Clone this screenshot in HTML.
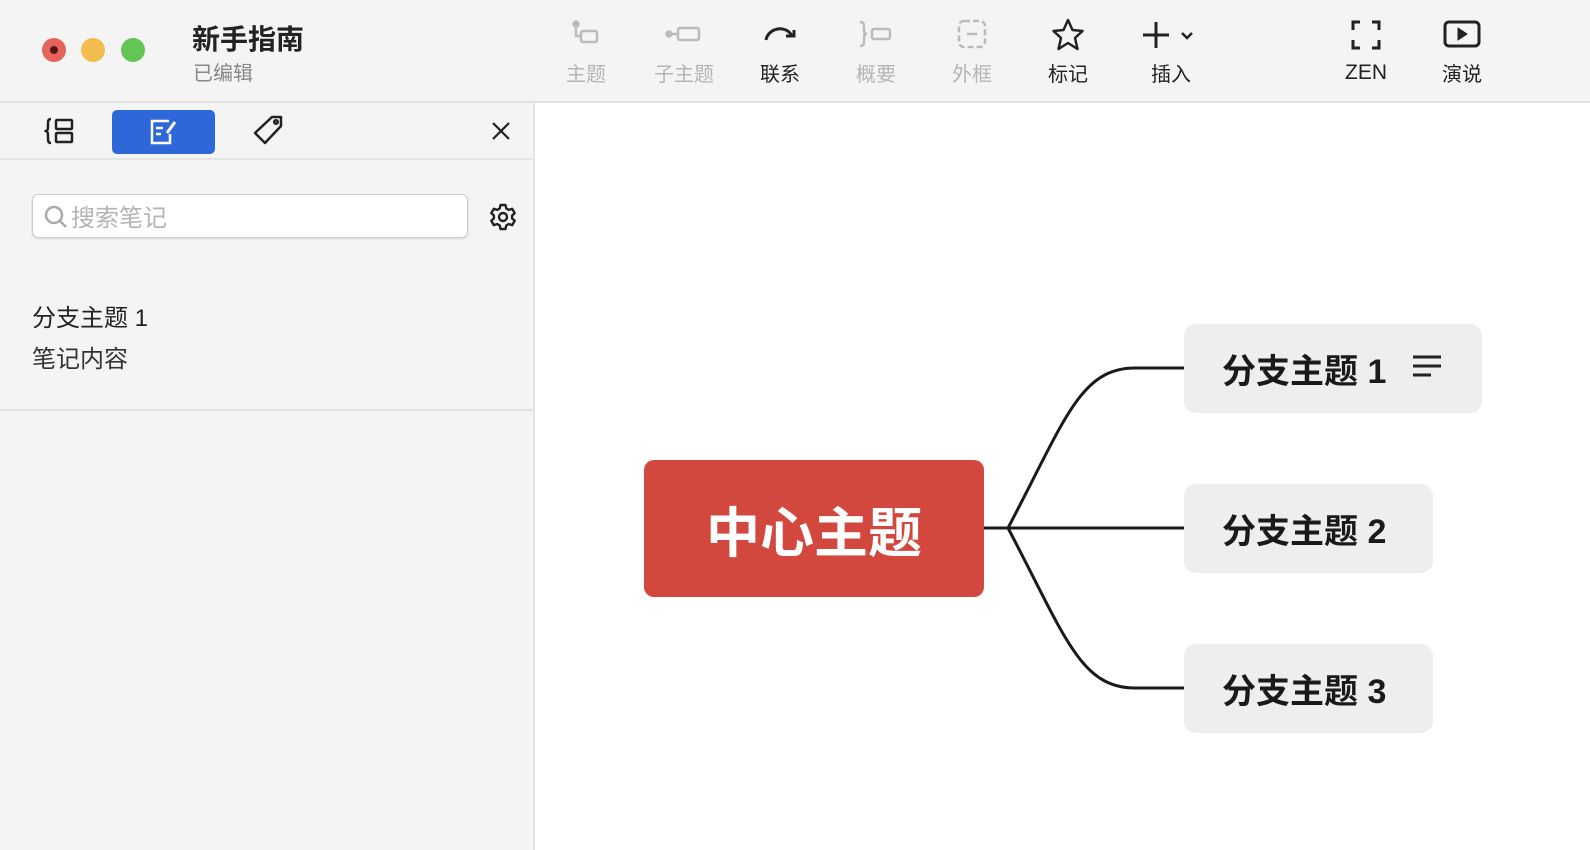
<!DOCTYPE html>
<html><head><meta charset="utf-8"><style>
*{margin:0;padding:0;box-sizing:border-box}
body{width:1590px;height:850px;overflow:hidden;background:#fff;font-family:"Liberation Sans","Noto Sans CJK SC",sans-serif;position:relative}
.hdr{position:absolute;left:0;top:0;width:1590px;height:103px;background:#f4f4f4;border-bottom:2px solid #e2e2e2}
.tl{position:absolute;top:38px;width:24px;height:24px;border-radius:50%}
.ti{position:absolute;text-align:center;font-size:20px;transform:translateX(-50%);top:58px;white-space:nowrap}
.ic{position:absolute;top:18px;transform:translateX(-50%)}
.side{position:absolute;left:0;top:103px;width:535px;height:747px;background:#f4f4f4;border-right:2px solid #e4e4e4}
.node{position:absolute;background:#eeeeec;border-radius:12px;font-size:34px;font-weight:bold;color:#1a1a1a;padding-left:38px;display:flex;align-items:center}
</style></head><body>
<div class="hdr">
 <div class="tl" style="left:42px;background:#e5655b"><div style="position:absolute;left:8px;top:8px;width:8px;height:8px;border-radius:50%;background:#5a1410"></div></div>
 <div class="tl" style="left:81px;background:#f2bd4f"></div>
 <div class="tl" style="left:121px;background:#62c554"></div>
 <div style="position:absolute;left:192px;top:18px;font-size:28px;font-weight:bold;color:#222">新手指南</div>
 <div style="position:absolute;left:193px;top:57px;font-size:20px;color:#888">已编辑</div>

 <svg class="ic" style="left:586px" width="36" height="34" viewBox="0 0 36 34" fill="none" stroke="#bbb" stroke-width="2.5"><circle cx="8" cy="6" r="2.5" fill="#bbb"/><path d="M8 8v10h5"/><rect x="13" y="13" width="16" height="11" rx="2"/></svg>
 <div class="ti" style="left:586px;color:#b5b5b5">主题</div>
 <svg class="ic" style="left:684px" width="40" height="34" viewBox="0 0 40 34" fill="none" stroke="#bbb" stroke-width="2.5"><circle cx="5" cy="16" r="2.5" fill="#bbb"/><path d="M7 16h6"/><rect x="14" y="10" width="21" height="12" rx="2"/></svg>
 <div class="ti" style="left:684px;color:#b5b5b5">子主题</div>
 <svg class="ic" style="left:780px" width="40" height="34" viewBox="0 0 40 34" fill="none" stroke="#222" stroke-width="3"><path d="M6 22C8 10 26 6 32 18"/><path d="M26 18h8v-6" /></svg>
 <div class="ti" style="left:780px;color:#222">联系</div>
 <svg class="ic" style="left:876px" width="40" height="34" viewBox="0 0 40 34" fill="none" stroke="#bbb" stroke-width="2.5"><path d="M4 4c4 0 4 2 4 6s0 6 3 6c-3 0-3 2-3 6s0 6-4 6"/><rect x="16" y="11" width="18" height="10" rx="2"/></svg>
 <div class="ti" style="left:876px;color:#b5b5b5">概要</div>
 <svg class="ic" style="left:972px" width="36" height="34" viewBox="0 0 36 34" fill="none" stroke="#bbb" stroke-width="2.5" stroke-dasharray="6 3"><rect x="5" y="3" width="26" height="26" rx="5"/><path d="M13 16h10" stroke-dasharray="none"/></svg>
 <div class="ti" style="left:972px;color:#b5b5b5">外框</div>
 <svg class="ic" style="left:1068px" width="36" height="34" viewBox="0 0 36 34" fill="none" stroke="#222" stroke-width="2.5" stroke-linejoin="round"><path d="M18 2l4.5 10 10 1-7.5 7 2.5 11-9.5-6-9.5 6 2.5-11-7.5-7 10-1z"/></svg>
 <div class="ti" style="left:1068px;color:#222">标记</div>
 <svg class="ic" style="left:1171px" width="70" height="34" viewBox="0 0 70 34" fill="none" stroke="#222" stroke-width="3"><path d="M20 4v26M7 17h26"/><path d="M46 15l5 5 5-5" stroke-width="2.5"/></svg>
 <div class="ti" style="left:1171px;color:#222">插入</div>
 <svg class="ic" style="left:1366px" width="36" height="34" viewBox="0 0 36 34" fill="none" stroke="#222" stroke-width="3"><path d="M12 4H5v8M24 4h7v8M5 22v8h7M31 22v8h-7"/></svg>
 <div class="ti" style="left:1366px;color:#222;top:61px;font-size:21px">ZEN</div>
 <svg class="ic" style="left:1462px" width="40" height="34" viewBox="0 0 40 34" fill="none" stroke="#222" stroke-width="3"><rect x="3" y="4" width="34" height="24" rx="4"/><path d="M16 10v12l9-6z" fill="#222" stroke-width="1"/></svg>
 <div class="ti" style="left:1462px;color:#222">演说</div>
</div>

<div class="side">
 <div style="position:absolute;left:0;top:55px;width:533px;height:2px;background:#e4e4e4"></div>
 <svg style="position:absolute;left:44px;top:13px" width="34" height="30" viewBox="0 0 34 30" fill="none" stroke="#222" stroke-width="2.5"><path d="M7 3C4 3 4 5 4 9s0 5-2 6c2 1 2 2 2 6s0 6 3 6"/><rect x="12" y="4" width="16" height="9" rx="1"/><rect x="12" y="17" width="16" height="9" rx="1"/></svg>
 <div style="position:absolute;left:112px;top:7px;width:103px;height:44px;background:#2e67d7;border-radius:5px"></div>
 <svg style="position:absolute;left:148px;top:14px" width="34" height="30" viewBox="0 0 34 30" fill="none" stroke="#fff" stroke-width="2.5"><path d="M21 4H4v22h18v-9"/><path d="M8 11h7M8 17h5"/><path d="M27 5l-8 11" stroke-width="3"/></svg>
 <svg style="position:absolute;left:252px;top:11px" width="34" height="34" viewBox="0 0 34 34" fill="none" stroke="#222" stroke-width="2.5" stroke-linejoin="round"><path d="M20 3h9v9L13 29 3 19z"/><circle cx="24" cy="8" r="1.8"/></svg>
 <svg style="position:absolute;left:490px;top:17px" width="22" height="22" viewBox="0 0 22 22" stroke="#222" stroke-width="2.2"><path d="M3 3l16 16M19 3L3 19"/></svg>
 <div style="position:absolute;left:32px;top:91px;width:436px;height:44px;background:#fff;border:1.5px solid #ccc;border-radius:6px;box-shadow:0 1px 2px rgba(0,0,0,.12)">
  <svg style="position:absolute;left:10px;top:9px" width="26" height="26" viewBox="0 0 26 26" fill="none" stroke="#aaa" stroke-width="2.5"><circle cx="11" cy="11" r="8"/><path d="M17 17l6 6"/></svg>
  <div style="position:absolute;left:38px;top:3px;font-size:24px;color:#b4b4b4">搜索笔记</div>
 </div>
 <svg style="position:absolute;left:488px;top:99px" width="30" height="30" viewBox="0 0 30 30" fill="none" stroke="#222" stroke-width="2.4" stroke-linejoin="round"><path d="M12.5 3h5l.8 3.5 2.5 1.4 3.4-1.1 2.5 4.3-2.6 2.4v2.9l2.6 2.4-2.5 4.3-3.4-1.1-2.5 1.4-.8 3.6h-5l-.8-3.6-2.5-1.4-3.4 1.1-2.5-4.3 2.6-2.4v-2.9L3.3 11.1l2.5-4.3 3.4 1.1 2.5-1.4z"/><circle cx="15" cy="15" r="4"/></svg>
 <div style="position:absolute;left:32px;top:195px;font-size:24px;color:#222">分支主题 1</div>
 <div style="position:absolute;left:32px;top:236px;font-size:24px;color:#333">笔记内容</div>
 <div style="position:absolute;left:0;top:306px;width:533px;height:2px;background:#e4e4e4"></div>
</div>

<svg style="position:absolute;left:0;top:0" width="1590" height="850" fill="none" stroke="#1a1a1a" stroke-width="3">
 <path d="M984 528H1008"/>
 <path d="M1008 528C1065 420 1080 368 1135 368H1184"/>
 <path d="M1008 528H1184"/>
 <path d="M1008 528C1065 636 1080 688 1135 688H1184"/>
</svg>
<div style="position:absolute;left:644px;top:460px;width:340px;height:137px;background:#d3483e;border-radius:10px;color:#fff;font-size:54px;font-weight:bold;display:flex;align-items:center;justify-content:center">中心主题</div>
<div class="node" style="left:1184px;top:324px;width:298px;height:89px">分支主题 1
 <svg style="position:absolute;left:228px;top:30px" width="30" height="26" viewBox="0 0 30 26" stroke="#222" stroke-width="3"><path d="M1 3h28M1 12h28M1 21h18"/></svg></div>
<div class="node" style="left:1184px;top:484px;width:249px;height:89px">分支主题 2</div>
<div class="node" style="left:1184px;top:644px;width:249px;height:89px">分支主题 3</div>
</body></html>
